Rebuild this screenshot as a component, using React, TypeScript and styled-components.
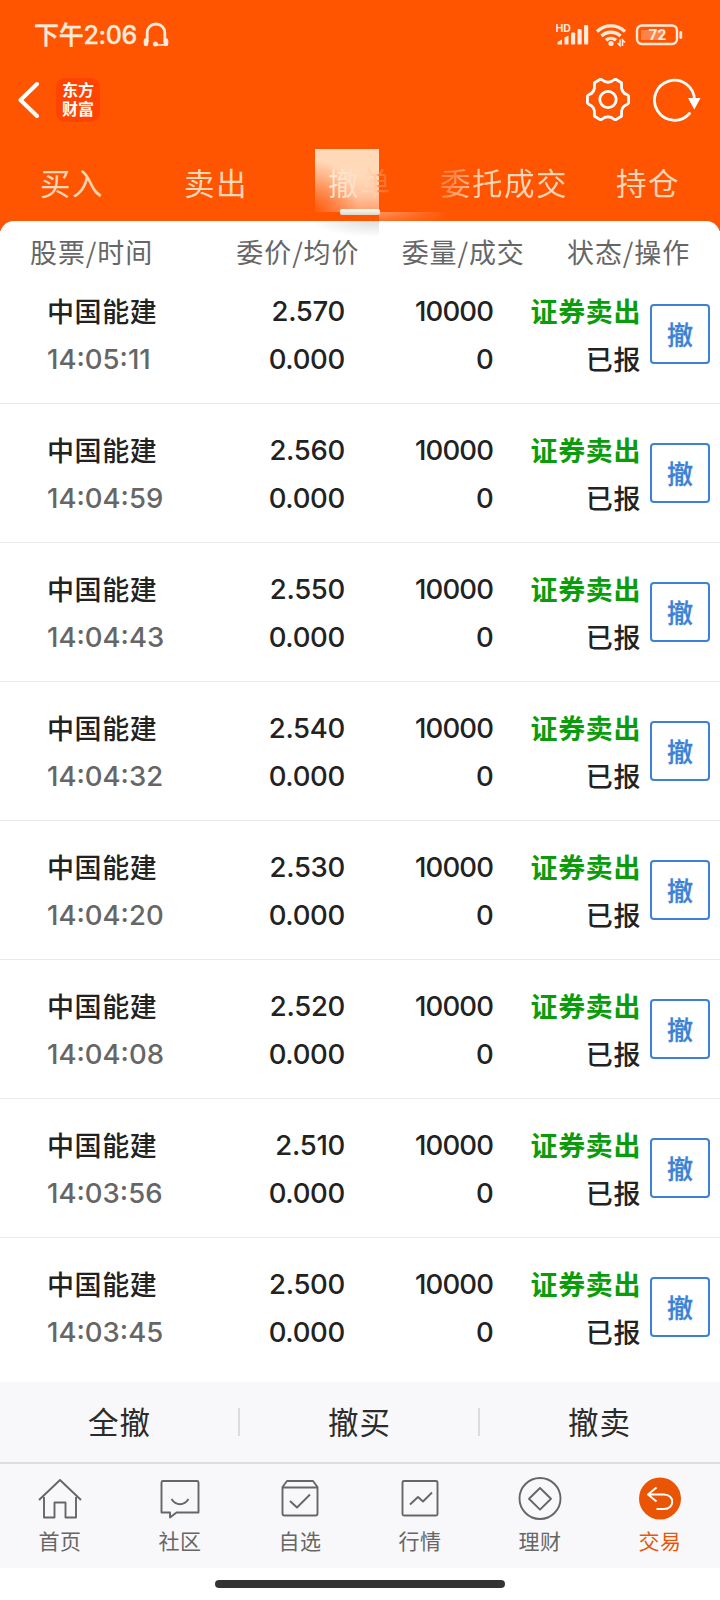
import React from "react";
import styled, { createGlobalStyle } from "styled-components";

const cjk = `"Noto Sans CJK SC", sans-serif`;

const Global = createGlobalStyle`
  * { box-sizing: border-box; }
  body { margin: 0; background: #fff; font-family: Inter, ${cjk}; color: #222; }
  button { border: 0; margin: 0; padding: 0; background: none; font: inherit; color: inherit; }
`;

const Screen = styled.div`
  width: 720px;
  height: 1600px;
  display: flex;
  flex-direction: column;
  overflow: hidden;
  background: #fff;
`;

const Header = styled.header`
  height: 221px;
  background: #ff5500;
  display: flex;
  flex-direction: column;
`;

const StatusBar = styled.div`
  height: 70px;
  padding: 0 37px 0 34px;
  display: flex;
  align-items: center;
  justify-content: space-between;
`;

const Clock = styled.div`
  display: flex;
  align-items: center;
  color: #ffeadb;
  font-size: 25px;
  font-weight: 500;
  line-height: 36px;
  letter-spacing: -0.3px;
  -webkit-text-stroke: 0.3px #ffeadb;
`;

const Indicators = styled.div`
  display: flex;
  align-items: center;
`;

const TitleBar = styled.div`
  height: 60px;
  padding: 0 19px 0 18px;
  display: flex;
  align-items: center;
`;

const Logo = styled.div`
  width: 44px;
  height: 44px;
  margin-left: 16px;
  border-radius: 9px;
  background: #ff4300;
  color: #fff;
  display: flex;
  flex-direction: column;
  align-items: center;
  padding-top: 2px;
  font: 700 16px/19px "Noto Sans CJK SC", sans-serif;
`;

const Tools = styled.div`
  margin-left: auto;
  display: flex;
  gap: 23px;
`;

const Tabs = styled.nav`
  flex: 1;
  display: flex;
`;

const Tab = styled.button`
  position: relative;
  width: 144px;
  padding-top: 15px;
  display: flex;
  justify-content: center;
  font-family: ${cjk};
  font-size: 30.5px;
  line-height: 74px;
  letter-spacing: 1.5px;
  color: #ffd6b8;
  white-space: nowrap;
`;

const TabLabel = styled.span<{ $fade?: string }>`
  position: relative;
  height: 74px;
  ${(p) => p.$fade && `background: ${p.$fade}; background-clip: text; -webkit-background-clip: text; color: transparent;`}
`;

const Glow = styled.span`
  position: absolute;
  left: 27px;
  top: 19px;
  width: 64px;
  height: 63px;
  background: radial-gradient(ellipse 44px 52px at 0 100%, #ff5c0a 0, rgba(255, 100, 28, 0.6) 45%, transparent 100%),
    linear-gradient(to top, rgba(255, 120, 62, 0.6), rgba(255, 160, 112, 0.3) 28%, transparent 55%),
    #ffd9b8;
`;

const Flare = styled.span`
  position: absolute;
  left: 91px;
  top: 82px;
  width: 70px;
  height: 9px;
  background: linear-gradient(to bottom, transparent, rgba(255, 85, 0, 0.6)),
    linear-gradient(to right, #ff9560, #ff5500);
`;

const Underline = styled.span`
  position: absolute;
  z-index: 2;
  left: 52px;
  top: 79px;
  width: 40px;
  height: 6px;
  border-radius: 2px;
  background: linear-gradient(#fffaf0, #ddd5cc);
`;

const Sheet = styled.main`
  flex: 1;
  background: linear-gradient(#f95509 10px, #fff 10px);
`;

const Columns = styled.div`
  position: relative;
  height: 44px;
  border-radius: 14px 14px 0 0;
  background: #fff;
  display: flex;
  justify-content: space-between;
  padding: 0 31px 0 30px;
  font-family: ${cjk};
  font-size: 27px;
  line-height: 61px;
  letter-spacing: 0.9px;
  color: #666;
`;

const Column = styled.div<{ $w: number }>`
  width: ${(p) => p.$w}px;
  white-space: nowrap;
`;

const Shade = styled.span`
  position: absolute;
  left: 315px;
  top: 0;
  width: 64px;
  height: 15px;
  background: radial-gradient(ellipse at 90% 0, rgba(0, 0, 0, 0.13), transparent 75%);
`;

const Row = styled.section`
  height: 139px;
  padding: 22px 10px 0 47px;
  display: flex;
  border-bottom: 1px solid #e9e9e9;
  &:last-child { border-bottom: 0; }
`;

const Cell = styled.div<{ $w: number; $right?: boolean }>`
  width: ${(p) => p.$w}px;
  display: flex;
  flex-direction: column;
  align-items: ${(p) => (p.$right ? "flex-end" : "flex-start")};
`;

const Name = styled.div<{ $sell?: boolean }>`
  height: 48px;
  font: ${(p) => (p.$sell ? 700 : 500)} 27px/47px ${cjk};
  letter-spacing: 0.6px;
  color: ${(p) => (p.$sell ? "#0a9c0a" : "#222")};
  white-space: nowrap;
`;

const Figure = styled.div<{ $muted?: boolean; $track?: number }>`
  height: 48px;
  font-size: 27.5px;
  line-height: 48px;
  font-weight: 500;
  letter-spacing: ${(p) => p.$track ?? 0}px;
  color: ${(p) => (p.$muted ? "#666" : "#222")};
`;

const Cancel = styled.button`
  width: 60px;
  height: 60px;
  margin: 17px 0 0 9px;
  border: 2px solid #3b82d6;
  border-radius: 4px;
  color: #3b82d6;
  font: 500 26px/38px ${cjk};
  -webkit-text-stroke: 0.3px #3b82d6;
  padding-bottom: 1px;
`;

const Actions = styled.div`
  height: 82px;
  background: #f8f8fa;
  border-bottom: 2px solid #dedede;
  display: flex;
  align-items: center;
`;

const Action = styled.button`
  position: relative;
  width: 240px;
  height: 28px;
  font: 400 30.5px/24px ${cjk};
  letter-spacing: 1px;
  color: #2b2b2b;
  padding: 0 1px 3px 0;
  & + &::before {
    content: "";
    position: absolute;
    left: -2px;
    top: 0;
    width: 2px;
    height: 28px;
    background: #dcdcde;
  }
`;

const NavBar = styled.nav`
  height: 104px;
  background: #f8f8fa;
  display: flex;
`;

const NavItem = styled.button<{ $active?: boolean }>`
  flex: 1;
  padding-top: 13px;
  display: flex;
  flex-direction: column;
  align-items: center;
  font: 400 21px/36px ${cjk};
  letter-spacing: 0.4px;
  color: ${(p) => (p.$active ? "#e95504" : "#666")};
`;

const HomeArea = styled.footer`
  height: 32px;
  display: flex;
  justify-content: center;
  padding-top: 12px;
`;

const HomeHandle = styled.div`
  width: 290px;
  height: 8px;
  border-radius: 4px;
  background: #333;
`;

const HeadphonesIcon = styled.svg`
  margin-left: 6px;
  margin-top: -1px;
`;

const WifiIcon = styled.svg`
  margin-left: 6px;
`;

const BatteryIcon = styled.svg`
  margin-left: 9px;
`;

const Headphones = () => (
  <HeadphonesIcon width="26" height="26" viewBox="0 0 26 26" fill="none" stroke="#ffeadb" strokeWidth="2.8">
    <path d="M4.200 20V10.500a8.800 8.500 0 0 1 17.600 0V20" />
    <path d="M22 22.500c-3 .8-6 .6-9 .2" strokeWidth="1.600" />
    <path d="M3 18.500v3.500M23 18.500v3.500" strokeWidth="4.600" strokeLinecap="round" />
    <circle cx="12.400" cy="22" r="2.500" fill="#ffeadb" stroke="none" />
  </HeadphonesIcon>
);

const Signal = () => (
  <svg width="34" height="24" viewBox="0 0 34 24" fill="#ffeadb">
    <text x="-0.5" y="9" fontFamily="Inter, sans-serif" fontSize="10.5" fontWeight="700">HD</text>
    <path d="M1.500 21.500v-2.500l4.500-2.500v5zM8.500 21.500v-7l4-2v9z" />
    <rect x="15" y="9.500" width="4.200" height="12" rx="1" />
    <rect x="21.500" y="6" width="4.200" height="15.500" rx="1" />
    <rect x="28" y="2" width="4.200" height="19.500" rx="1" />
  </svg>
);

const Wifi = () => (
  <WifiIcon width="30" height="24" viewBox="0 0 30 24" fill="none" stroke="#ffeadb" strokeWidth="3.300">
    <path d="M1 8.500c8-7.500 20-7.500 28 0M5.500 13c5.500-5 13.500-5 19 0M10 17.300c3-2.600 7-2.600 10 0" />
    <circle cx="15" cy="20.500" r="2.600" fill="#ffeadb" stroke="none" />
    <path d="M24 16.500v6l-2.500-2.500M26.500 23v-6l2.500 2.500" strokeWidth="1.600" />
  </WifiIcon>
);

const Battery = () => (
  <BatteryIcon width="48" height="22" viewBox="0 0 48 22" fill="none">
    <rect x="2" y="1.500" width="40" height="18.500" rx="5" stroke="#ffeadb" strokeWidth="2.400" />
    <rect x="6" y="6" width="22" height="10" rx="1" fill="#ff8348" />
    <path d="M45.800 8.500v5" stroke="#ffeadb" strokeWidth="2.800" strokeLinecap="round" />
    <text x="22.500" y="16" textAnchor="middle" fill="#ffeadb" fontFamily="Roboto, sans-serif" fontSize="15.500" fontWeight="700">72</text>
  </BatteryIcon>
);

const Back = () => (
  <svg width="22" height="38" viewBox="0 0 22 38" fill="none" stroke="#fff" strokeWidth="4" strokeLinecap="round" strokeLinejoin="round">
    <path d="M19 3L2.500 19L19 35" />
  </svg>
);

const Gear = () => (
  <svg width="44" height="44" viewBox="0 0 44 44" fill="none" stroke="#fff" strokeWidth="2.800" strokeLinejoin="round">
    <path d="M14 1.500h1.500q6.500 5.500 13 0H30l5.500 3.200v2.300q-.5 8 5.500 9.500l1.600 1.500v7L41 26.500q-6 2-5.500 9.500v2.300L30 41.500h-1.500q-6.500-5.500-13 0H14l-5.500-3.200V36Q9 28.500 3 26.500L1.400 25v-7L3 16.500Q9 15 8.500 7V4.700z" />
    <circle cx="22" cy="21.500" r="8.200" />
  </svg>
);

const Refresh = () => (
  <svg width="48" height="44" viewBox="0 0 48 44" fill="none" stroke="#fff" strokeWidth="2.800">
    <path d="M36.500 35.500A20 20 0 1 1 41.500 22" strokeLinecap="round" />
    <path d="M35 20h12.500l-6.200 11.500z" fill="#fff" stroke="none" />
  </svg>
);

const navShapes = [
  <path d="M1 22L22 2l21 20M6 19v20.500h10.500V24.500h11v15H38V19" />,
  <>
    <path d="M5 3h34a1.500 1.500 0 0 1 1.500 1.500v30H18.500l-6.500 5v-5H3.500v-30A1.500 1.500 0 0 1 5 3z" />
    <path d="M13.500 21c4.500 7 12.500 7 17 0" />
  </>,
  <>
    <path d="M9 3h26l4.500 6v26.500a2 2 0 0 1-2 2h-31a2 2 0 0 1-2-2V9zM4.500 9.500h35" />
    <path d="M12 23l7 6.500L32 16.500" />
  </>,
  <>
    <rect x="4.500" y="3" width="35" height="34.500" rx="1.500" />
    <path d="M12 26.500l8-7.500 5 4.500 9-9" />
  </>,
  <>
    <circle cx="22" cy="20.500" r="20.500" />
    <path d="M22 10l11 10.800-11 10.800-11-10.800z" />
  </>,
  <>
    <circle cx="22" cy="20.500" r="21" fill="#e95504" stroke="none" />
    <path d="M18.500 9.500l-8.500 7 8.500 7M10.500 16.500H26c11 0 11 14.500 0 14.500h-7.500" stroke="#fff" />
  </>,
];

const navLabels = ["首页", "社区", "自选", "行情", "理财", "交易"];

const orders = [
  ["14:05:11", "2.570"],
  ["14:04:59", "2.560"],
  ["14:04:43", "2.550"],
  ["14:04:32", "2.540"],
  ["14:04:20", "2.530"],
  ["14:04:08", "2.520"],
  ["14:03:56", "2.510"],
  ["14:03:45", "2.500"],
];

export default function App() {
  return (
    <Screen>
      <Global />
      <Header>
        <StatusBar>
          <Clock>下午2:06<Headphones /></Clock>
          <Indicators><Signal /><Wifi /><Battery /></Indicators>
        </StatusBar>
        <TitleBar>
          <Back />
          <Logo><span>东方</span><span>财富</span></Logo>
          <Tools><Gear /><Refresh /></Tools>
        </TitleBar>
        <Tabs>
          <Tab><TabLabel>买入</TabLabel></Tab>
          <Tab><TabLabel>卖出</TabLabel></Tab>
          <Tab>
            <Glow />
            <Flare />
            <TabLabel $fade="linear-gradient(to right, #ffe8d6, #ffe0c8 45%, #ffc8a2 76%, #ff7a38 80%, #ff681c)">撤单</TabLabel>
            <Underline />
          </Tab>
          <Tab><TabLabel $fade="linear-gradient(115deg, #ff8a50 18%, #ffd6b8 36%)">委托成交</TabLabel></Tab>
          <Tab><TabLabel>持仓</TabLabel></Tab>
        </Tabs>
      </Header>
      <Sheet>
        <Columns>
          <Column $w={206}>股票/时间</Column>
          <Column $w={165}>委价/均价</Column>
          <Column $w={165}>委量/成交</Column>
          <Column $w={122}>状态/操作</Column>
          <Shade />
        </Columns>
        {orders.map(([time, price]) => (
          <Row key={time}>
            <Cell $w={150}><Name>中国能建</Name><Figure $muted>{time}</Figure></Cell>
            <Cell $w={148} $right><Figure $track={-0.3}>{price}</Figure><Figure $track={-0.3}>0.000</Figure></Cell>
            <Cell $w={148} $right><Figure $track={-0.9}>10000</Figure><Figure $track={-0.7}>0</Figure></Cell>
            <Cell $w={148} $right><Name $sell>证券卖出</Name><Name>已报</Name></Cell>
            <Cancel>撤</Cancel>
          </Row>
        ))}
      </Sheet>
      <Actions><Action>全撤</Action><Action>撤买</Action><Action>撤卖</Action></Actions>
      <NavBar>
        {navLabels.map((label, i) => (
          <NavItem key={label} $active={i === 5}>
            <svg width="44" height="45" viewBox="0 -1 44 45" fill="none" stroke="currentColor" strokeWidth="1.900" strokeLinejoin="round">
              {navShapes[i]}
            </svg>
            {label}
          </NavItem>
        ))}
      </NavBar>
      <HomeArea><HomeHandle /></HomeArea>
    </Screen>
  );
}
